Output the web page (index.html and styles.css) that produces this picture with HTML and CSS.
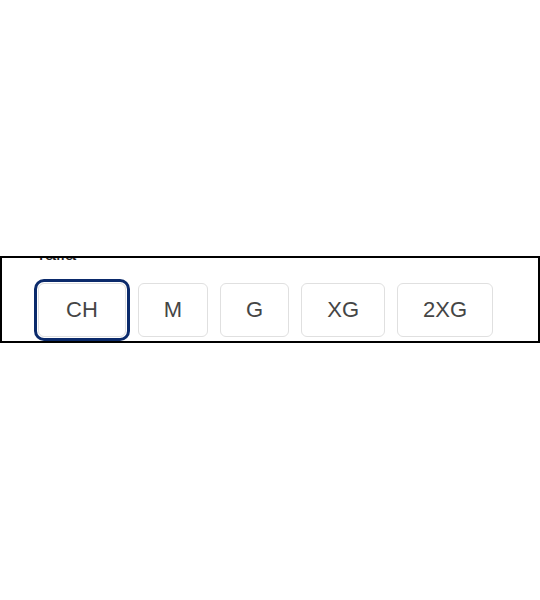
FILE: index.html
```html
<!DOCTYPE html>
<html lang="es">
<head>
<meta charset="utf-8">
<title>Talla</title>
<link rel="stylesheet" href="styles.css">
</head>
<body>
<div class="page">
  <div class="frame">
    <div class="content">
      <div class="label">Talla</div>
      <div class="sizes">
        <button class="size selected">CH</button>
        <button class="size">M</button>
        <button class="size">G</button>
        <button class="size">XG</button>
        <button class="size">2XG</button>
      </div>
    </div>
  </div>
</div>
</body>
</html>
```
FILE: styles.css
```css
html, body {
  margin: 0;
  padding: 0;
  background: #fff;
}
.page {
  padding-top: 256px;
  width: 540px;
}
.frame {
  box-sizing: border-box;
  width: 540px;
  height: 87px;
  border: 2px solid #000;
  overflow: hidden;
  background: #fff;
}
.content {
  margin-top: -17px;
  padding-left: 33px;
  font-family: "Liberation Sans", Arial, sans-serif;
}
.label {
  font-size: 20px;
  line-height: 24px;
  color: #222;
}
.sizes {
  display: flex;
  gap: 12px;
  margin-top: 18px;
  padding-left: 3px;
}
.size {
  box-sizing: border-box;
  height: 54px;
  padding: 0 25px;
  border: 1px solid #e0e0e0;
  border-radius: 6px;
  background: #fff;
  font-family: "Liberation Sans", Arial, sans-serif;
  font-size: 22px;
  color: #454545;
  line-height: 52px;
}
.size.selected {
  padding: 0 27px;
  box-shadow: 0 0 0 1px #fff, 0 0 0 4px #0b2a6b;
}
```
